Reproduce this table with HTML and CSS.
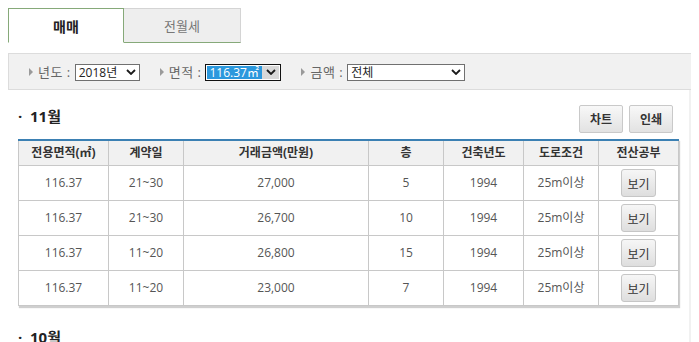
FILE: index.html
```html
<!DOCTYPE html>
<html lang="ko">
<head>
<meta charset="utf-8">
<title>실거래가</title>
<link rel="stylesheet" href="styles.css">
</head>
<body>
<div class="page">
  <div class="tabs">
    <div class="tab tab-active">매매</div>
    <div class="tab">전월세</div>
  </div>

  <div class="filter">
    <div class="filter-item">
      <span class="tri"></span>
      <span class="label">년도 :</span>
      <div class="sel sel-year"><span class="sel-text">2018년</span><svg class="chev" width="10" height="6" viewBox="0 0 10 6"><polyline points="1,1 5,5 9,1" fill="none" stroke="#1a1a1a" stroke-width="1.8"/></svg></div>
    </div>
    <div class="filter-item">
      <span class="tri"></span>
      <span class="label">면적 :</span>
      <div class="sel sel-area sel-focus"><span class="sel-text sel-hl">116.37㎡</span><span class="sel-btn"><svg class="chev" width="10" height="6" viewBox="0 0 10 6"><polyline points="1,1 5,5 9,1" fill="none" stroke="#1a1a1a" stroke-width="1.8"/></svg></span></div>
    </div>
    <div class="filter-item">
      <span class="tri"></span>
      <span class="label">금액 :</span>
      <div class="sel sel-price"><span class="sel-text">전체</span><svg class="chev" width="10" height="6" viewBox="0 0 10 6"><polyline points="1,1 5,5 9,1" fill="none" stroke="#1a1a1a" stroke-width="1.8"/></svg></div>
    </div>
  </div>

  <div class="main">
    <div class="content">
      <section class="month">
        <div class="month-head">
          <h3 class="month-title"><span class="dot">·</span>11월</h3>
          <div class="actions">
            <button class="btn">차트</button>
            <button class="btn">인쇄</button>
          </div>
        </div>
        <table class="deals">
          <colgroup>
            <col class="c1"><col class="c2"><col class="c3"><col class="c4"><col class="c5"><col class="c6"><col class="c7">
          </colgroup>
          <thead>
            <tr><th>전용면적(㎡)</th><th>계약일</th><th>거래금액(만원)</th><th>층</th><th>건축년도</th><th>도로조건</th><th>전산공부</th></tr>
          </thead>
          <tbody>
            <tr><td>116.37</td><td>21~30</td><td>27,000</td><td>5</td><td>1994</td><td>25m이상</td><td><button class="view">보기</button></td></tr>
            <tr><td>116.37</td><td>21~30</td><td>26,700</td><td>10</td><td>1994</td><td>25m이상</td><td><button class="view">보기</button></td></tr>
            <tr><td>116.37</td><td>11~20</td><td>26,800</td><td>15</td><td>1994</td><td>25m이상</td><td><button class="view">보기</button></td></tr>
            <tr><td>116.37</td><td>11~20</td><td>23,000</td><td>7</td><td>1994</td><td>25m이상</td><td><button class="view">보기</button></td></tr>
          </tbody>
        </table>
      </section>
      <section class="month">
        <div class="month-head">
          <h3 class="month-title"><span class="dot">·</span>10월</h3>
        </div>
      </section>
    </div>
    <div class="scrollbar">
      <svg class="sb-arrow" width="9" height="6" viewBox="0 0 9 6"><polyline points="1,5 4.5,1.5 8,5" fill="none" stroke="#505050" stroke-width="2"/></svg>
      <div class="sb-thumb"></div>
    </div>
  </div>
</div>
</body>
</html>
```

FILE: styles.css
```css
html, body {
  overflow: hidden;
}
body {
  margin: 8px;
  background: #fff;
  font-family: "Open Sans", "Noto Sans CJK KR", sans-serif;
  color: #555;
}
.page {
  width: 696px;
}

/* tabs */
.tabs {
  display: flex;
}
.tab {
  box-sizing: border-box;
  height: 35px;
  display: flex;
  align-items: center;
  justify-content: center;
  font-size: 13px;
  color: #777;
}
.tab-active {
  width: 116px;
  background: #fff;
  border: 1px solid #86a979;
  border-bottom: 1px solid #fff;
  font-weight: bold;
  font-size: 14px;
  color: #222;
}
.tab:not(.tab-active) {
  width: 117px;
  background: #eeeeee;
  border-top: 1px solid #d4d4d4;
  border-right: 1px solid #d4d4d4;
  border-bottom: 1px solid #86a979;
}

/* filter bar */
.filter {
  box-sizing: border-box;
  margin-top: 10px;
  height: 37px;
  background: #f1f1f1;
  border-top: 1px solid #dcdcdc;
  border-bottom: 1px solid #dcdcdc;
  border-left: 1px solid #dcdcdc;
  display: flex;
  align-items: center;
  padding-left: 20px;
  padding-top: 1px;
  gap: 20px;
}
.filter-item {
  display: flex;
  align-items: center;
}
.tri {
  width: 0;
  height: 0;
  border-top: 4px solid transparent;
  border-bottom: 4px solid transparent;
  border-left: 4px solid #9a9a9a;
  margin-right: 5px;
}
.label {
  font-size: 13px;
  color: #666;
  line-height: 17px;
  margin-right: 4px;
  letter-spacing: 0.5px;
}
.sel {
  box-sizing: border-box;
  height: 17px;
  background: #fff;
  border: 1px solid #707070;
  display: flex;
  align-items: center;
  justify-content: space-between;
  font-size: 12px;
  color: #222;
  line-height: 15px;
}
.sel-text {
  padding-left: 3px;
}
.sel .chev {
  margin-right: 3px;
}
.sel-year { width: 65px; }
.sel-area { width: 76px; }
.sel-price { width: 118px; }
.sel-focus {
  border-color: #111;
  padding: 1px;
  align-items: stretch;
}
.sel-hl {
  background: #2b98dd;
  color: #fff;
  padding-left: 2px;
  flex: 1;
  line-height: 13px;
}
.sel-btn {
  width: 17px;
  background: #d8d8d8;
  display: flex;
  align-items: center;
  justify-content: center;
}
.sel-btn .chev {
  margin: 0;
}

/* main */
.main {
  display: flex;
  height: 260px;
}
.content {
  width: 681px;
  padding-left: 10px;
  box-sizing: border-box;
}
.month {
  padding-top: 15px;
}
.month + .month {
  padding-top: 20px;
}
.month-head {
  display: flex;
  justify-content: space-between;
  align-items: flex-start;
  width: 655px;
}
.month-title {
  margin: 0;
  font-size: 15px;
  line-height: 20px;
  font-weight: bold;
  color: #222;
  padding-top: 1px;
}
.dot {
  display: inline-block;
  width: 12px;
  font-weight: bold;
}
.actions {
  display: flex;
  gap: 6px;
}
.btn {
  box-sizing: border-box;
  width: 44px;
  height: 28px;
  border: 1px solid #c9c9c9;
  border-radius: 2px;
  background: linear-gradient(#f8f8f8, #e2e2e2);
  font-family: "Noto Sans CJK KR", sans-serif;
  font-size: 12px;
  font-weight: bold;
  color: #333;
  padding: 0;
  line-height: 26px;
}

/* table */
.deals {
  margin-top: 6px;
  width: 660px;
  border-collapse: collapse;
  table-layout: fixed;
  box-shadow: 1px 2px 1px #cfcfcf;
}
.c1 { width: 90px; }
.c2 { width: 75px; }
.c3 { width: 185px; }
.c4 { width: 75px; }
.c5 { width: 80px; }
.c6 { width: 75px; }
.c7 { width: 80px; }
.deals th {
  height: 24px;
  padding: 0;
  background: #f1f1f1;
  border: 1px solid #c8c8c8;
  border-top: 2px solid #3b80b3;
  font-size: 12px;
  font-weight: bold;
  color: #333;
  line-height: 16px;
}
.deals td {
  height: 34px;
  padding: 0;
  border: 1px solid #c8c8c8;
  text-align: center;
  font-size: 12px;
  color: #555;
  line-height: 16px;
}
.view {
  box-sizing: border-box;
  width: 35px;
  height: 28px;
  border: 1px solid #c6c6c6;
  border-radius: 3px;
  background: linear-gradient(#f6f6f6, #dedede);
  font-family: "Noto Sans CJK KR", sans-serif;
  font-size: 12px;
  color: #333;
  padding: 0;
  vertical-align: middle;
}

/* scrollbar */
.scrollbar {
  width: 15px;
  background: #f1f1f1;
  display: flex;
  flex-direction: column;
  align-items: center;
}
.sb-arrow {
  margin-top: 20px;
  margin-right: 1px;
}
.sb-thumb {
  margin-top: 8px;
  width: 9px;
  flex: 1;
  background: #c1c1c1;
}
```
